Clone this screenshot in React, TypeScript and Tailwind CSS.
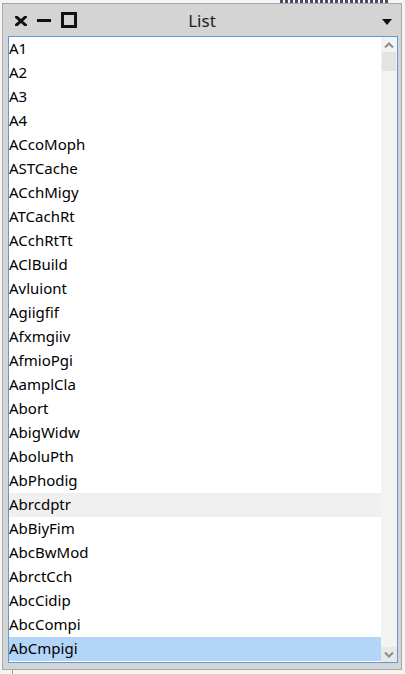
import { useState } from "react";

const ITEMS = [
  "A1",
  "A2",
  "A3",
  "A4",
  "ACcoMoph",
  "ASTCache",
  "ACchMigy",
  "ATCachRt",
  "ACchRtTt",
  "AClBuild",
  "Avluiont",
  "Agiigfif",
  "Afxmgiiv",
  "AfmioPgi",
  "AamplCla",
  "Abort",
  "AbigWidw",
  "AboluPth",
  "AbPhodig",
  "Abrcdptr",
  "AbBiyFim",
  "AbcBwMod",
  "AbrctCch",
  "AbcCidip",
  "AbcCompi",
  "AbCmpigi",
];

const font = { fontFamily: '"Noto Sans", "Open Sans", sans-serif' };

export default function App() {
  const [selected, setSelected] = useState(25);
  const [hover, setHover] = useState<number | null>(19);

  return (
    <div className="relative h-[674px] w-[405px] overflow-hidden bg-[#f4f4f4]" style={font}>
      {/* desktop bits peeking out behind the window */}
      <div className="absolute left-[280px] top-0 h-[3px] w-[110px] bg-[repeating-linear-gradient(90deg,#1c2340_0_3px,transparent_3px_5px)] opacity-80" />
      <div className="absolute left-[12px] top-[670px] h-[4px] w-px bg-[#9a9a9a]" />

      {/* window */}
      <div className="absolute left-[2px] top-[3px] flex h-[667px] w-[400px] flex-col border border-[#a9a9a9] bg-[#d4d4d4]">
        {/* title bar */}
        <div className="relative flex h-[32px] shrink-0 items-center">
          <div className="flex items-center pl-[12px]">
            <svg width="12" height="10" viewBox="0 0 12 10" className="mt-[2px]">
              <path d="M1.5 1 L10.5 9 M10.5 1 L1.5 9" stroke="#111" strokeWidth="3" strokeLinecap="square" />
            </svg>
            <div className="ml-[10px] h-[3px] w-[14px] bg-[#111]" />
            <div className="ml-[10px] h-[16px] w-[16px] border-[3px] border-[#111]" />
          </div>
          <div className="absolute inset-x-0 top-0 flex h-full items-center justify-center">
            <span className="text-[17px] leading-none text-[#222]">List</span>
          </div>
          <svg width="10" height="6" viewBox="0 0 10 6" className="absolute left-[379px] top-[15px]">
            <path d="M0 0 H10 L5 6 Z" fill="#111" />
          </svg>
        </div>

        {/* list box */}
        <div className="ml-[5px] flex h-[627px] w-[390px] border border-[#5a9be0] bg-white">
          <div className="flex-1 overflow-hidden">
            {ITEMS.map((item, i) => (
              <div
                key={item}
                onClick={() => setSelected(i)}
                onMouseEnter={() => setHover(i)}
                className={`flex h-[24px] items-center pb-[1px] text-[15px] text-black ${
                  i === selected ? "bg-[#b2d5f8]" : i === hover ? "bg-[#f0f0f0]" : ""
                }`}
              >
                {item}
              </div>
            ))}
          </div>

          {/* scrollbar */}
          <div className="flex w-[16px] flex-col bg-[#f3f3f3]">
            <div className="flex h-[15px] items-center justify-center">
              <svg width="10" height="6" viewBox="0 0 10 6">
                <path d="M1 5.5 L5 1.5 L9 5.5" fill="none" stroke="#8c8c8c" strokeWidth="2" />
              </svg>
            </div>
            <div className="mx-px h-[19px] bg-[#e3e3e3]" />
            <div className="flex-1" />
            <div className="flex h-[15px] items-center justify-center bg-[#e8e8e8]">
              <svg width="10" height="6" viewBox="0 0 10 6">
                <path d="M1 0.5 L5 4.5 L9 0.5" fill="none" stroke="#8c8c8c" strokeWidth="2" />
              </svg>
            </div>
          </div>
        </div>
      </div>
    </div>
  );
}
